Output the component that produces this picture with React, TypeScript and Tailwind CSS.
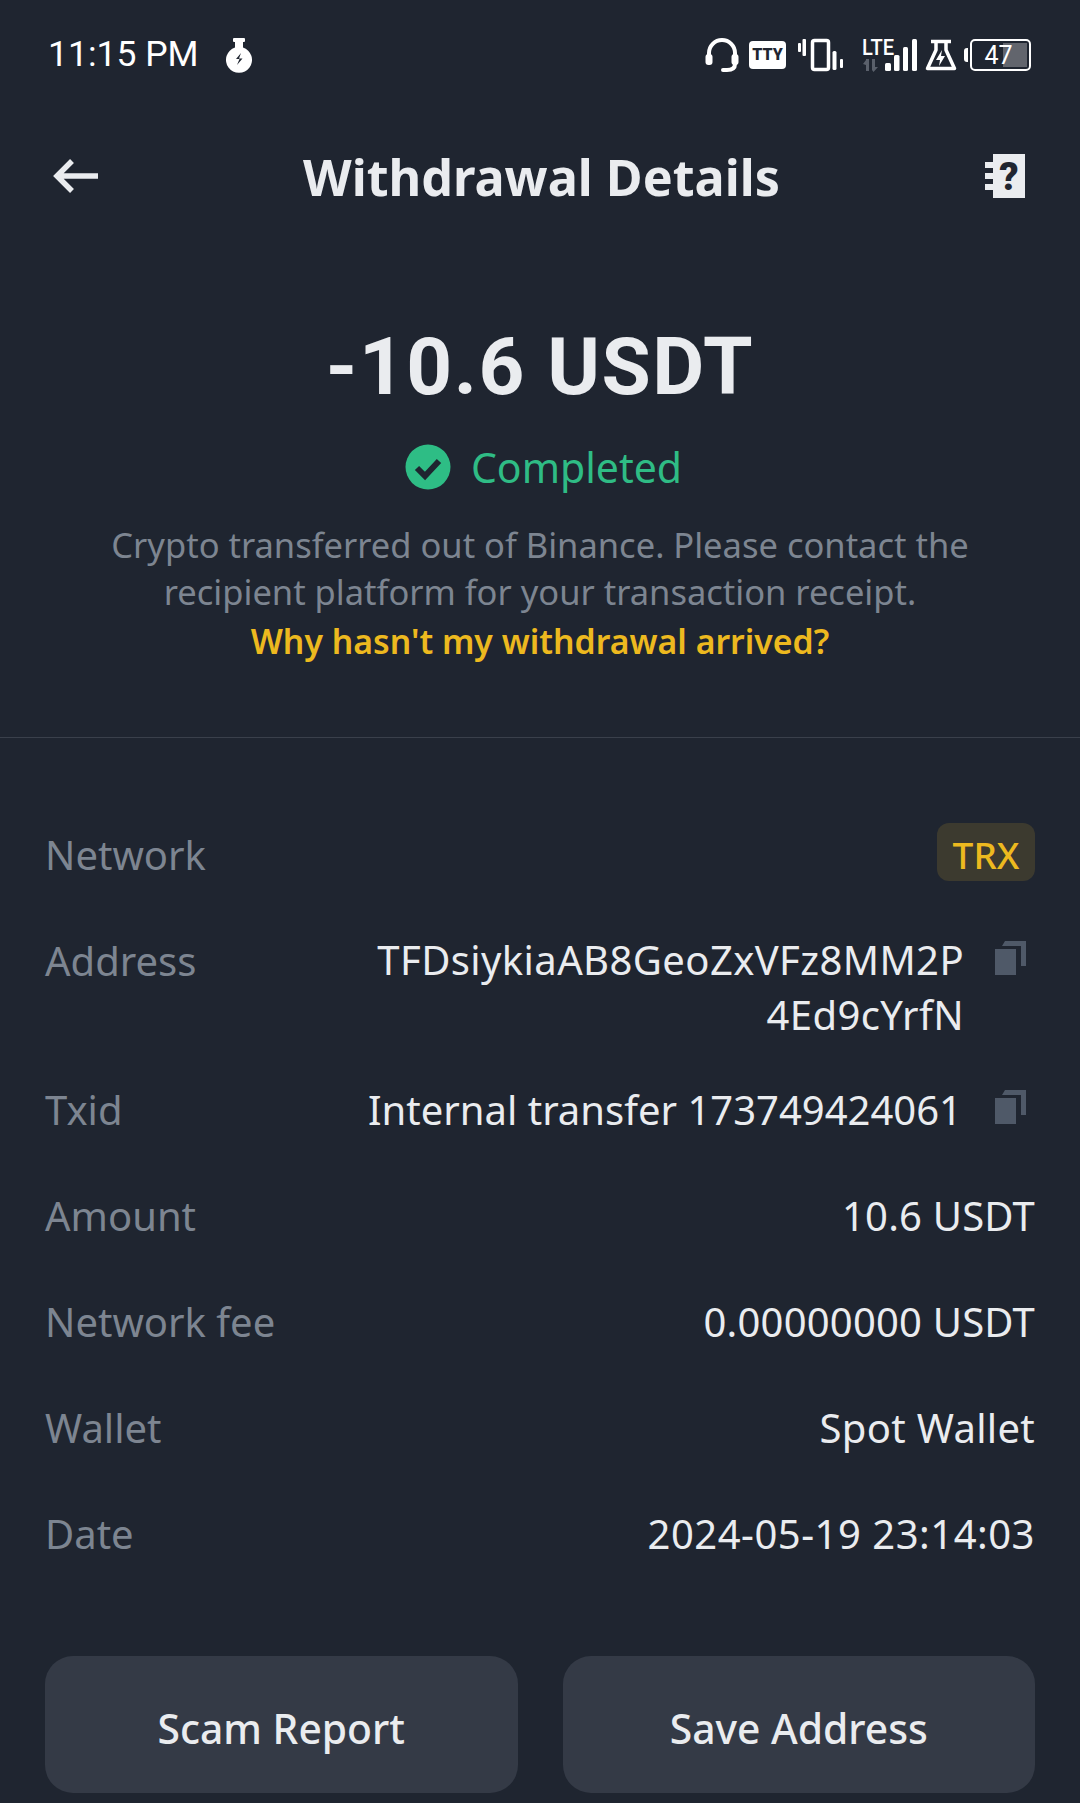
const rows = [
  { label: "Address", lines: ["TFDsiykiaAB8GeoZxVFz8MM2P", "4Ed9cYrfN"], rowClass: "-mb-[9px]", textClass: "tracking-[0.4px] leading-[55px] mr-[1px]", copy: true },
  { label: "Txid", lines: ["Internal transfer 173749424061"], rowClass: "", textClass: "mr-[3px]", copy: true },
  { label: "Amount", lines: ["10.6 USDT"], rowClass: "", textClass: "tracking-[0.2px]" },
  { label: "Network fee", lines: ["0.00000000 USDT"], rowClass: "", textClass: "tracking-[0.2px]" },
  { label: "Wallet", lines: ["Spot Wallet"], rowClass: "", textClass: "tracking-[0.3px]" },
  { label: "Date", lines: ["2024-05-19 23:14:03"], rowClass: "", textClass: "tracking-[0.5px]" },
];

const CopyIcon = () => (
  <svg width="32" height="36" viewBox="0 0 32 36" className="shrink-0" fill="#4f5968">
    <rect x="0" y="9" width="21" height="26" />
    <path d="M10 1H31V26H26V6H7Z" />
  </svg>
);

const StatusIcons = () => (
  <div className="flex items-center text-white">
    <svg width="34" height="36" viewBox="0 0 34 36" fill="none" stroke="white" strokeWidth="4">
      <path d="M4 20V16a13 13 0 0 1 26 0V27c0 4-3 6-8 6h-4" strokeLinecap="round" />
      <rect x="0.5" y="17" width="7" height="11" rx="3" fill="white" stroke="none" />
      <rect x="26.5" y="17" width="7" height="11" rx="3" fill="white" stroke="none" />
    </svg>
    <span className="ml-[10px] flex h-[28px] w-[37px] items-center justify-center rounded-[4px] bg-white font-['Roboto',sans-serif] text-[16px] font-black leading-none text-[#1f2530]">
      TTY
    </span>
    <svg width="46" height="34" viewBox="0 0 46 34" fill="white" className="ml-[12px]">
      <rect x="0" y="5" width="3" height="9" rx="1" />
      <rect x="4.5" y="1" width="3.5" height="17" rx="1" />
      <rect x="14.5" y="2.5" width="16" height="29" rx="2" fill="none" stroke="white" strokeWidth="3.5" />
      <rect x="34.5" y="13" width="4" height="19" rx="1.5" />
      <rect x="42" y="21" width="3" height="9" rx="1" />
    </svg>
    <svg width="56" height="34" viewBox="0 0 56 34" className="ml-[18px]" fill="white">
      <text x="0" y="17" fontFamily="Roboto" fontWeight="500" fontSize="22" textLength="32" lengthAdjust="spacingAndGlyphs">LTE</text>
      <path d="M4 21h3v12h-3zM1 26l3-4v5zM10 21h3v8h3l-4.5 5-1.5-2z" fill="#5a606b" />
      <rect x="23" y="25" width="6" height="8" rx="1.5" />
      <rect x="32" y="17" width="5.5" height="16" rx="1.5" />
      <rect x="41" y="9" width="5" height="24" rx="1.5" />
      <rect x="50" y="1" width="5" height="32" rx="1.5" />
    </svg>
    <svg width="32" height="32" viewBox="0 0 32 32" fill="none" stroke="white" strokeWidth="3.5" className="ml-[7px]">
      <path d="M6 2.5H26M11 2.5V11L2.5 29.5H29.5L21 11V2.5" strokeLinejoin="round" />
      <path d="M17 11l-6 10h4l-1 6 6-10h-4z" fill="white" stroke="none" />
    </svg>
    <div className="ml-[7px] flex items-center">
      <div className="h-[14px] w-[4px] rounded-l-[3px] bg-white" />
      <div className="relative ml-[2px] h-[32px] w-[61px] overflow-hidden rounded-[5px] border-2 border-white">
        <div className="absolute inset-y-[2px] right-[2px] w-[24px] bg-[#62656d]" />
        <span className="absolute inset-0 flex items-center justify-center pr-[4px] text-[25px] leading-none font-['Roboto',sans-serif]">47</span>
      </div>
    </div>
  </div>
);

export default function App() {
  return (
    <div className="min-h-[1803px] bg-[#1f2530] font-['Noto_Sans',sans-serif] text-[#eaecef]">
      {/* Status bar */}
      <div className="flex h-[110px] items-center justify-between pl-[48px] pr-[49px]">
        <div className="flex items-center">
          <span className="font-['Roboto',sans-serif] text-[35.500px] leading-none text-white">11:15 PM</span>
          <svg width="26" height="35" viewBox="0 0 26 35" className="ml-[27px]" fill="white">
            <rect x="7" y="0" width="12" height="4" rx="1" />
            <path d="M9 3h8v6.500a13 13 0 1 1-8 0z" />
            <path d="M15 15l-5 6h3.500l-2.500 6 5.500-6.500h-3.500l2-5.500z" fill="#1f2530" />
          </svg>
        </div>
        <StatusIcons />
      </div>

      {/* Title */}
      <div className="flex h-[132px] items-center justify-between pl-[53px] pr-[55px]">
        <svg width="45" height="34" viewBox="0 0 45 34" fill="none" stroke="#eaecef" strokeWidth="5.5">
          <path d="M45 17H5M19 2L4 17L19 32" />
        </svg>
        <h1 className="pt-[3px] text-[50.300px] font-bold leading-none">Withdrawal Details</h1>
        <svg width="40" height="44" viewBox="0 0 40 44" fill="#eaecef">
          <path d="M8 0H40V44H8V36H0V30H8V25H0V19H8V14H0V8H8Z" />
          <text x="24" y="36" textAnchor="middle" fontFamily="Roboto" fontWeight="900" fontSize="38" fill="#1f2530">?</text>
        </svg>
      </div>

      {/* Summary */}
      <div className="flex h-[496px] flex-col items-center border-b border-[#3a404b] pt-[84px]">
        <div className="font-['Roboto',sans-serif] text-[80px] font-bold leading-[82px] tracking-[1.5px]">-10.6 USDT</div>
        <div className="ml-[7px] mt-[34px] flex h-[50px] items-center gap-[20px] text-[#2fbc85]">
          <svg width="46" height="46" viewBox="0 0 46 46">
            <circle cx="23" cy="23" r="22.500" fill="#2ebd85" />
            <path d="M12 24L20 32L34 17" fill="none" stroke="#1f2530" strokeWidth="6" />
          </svg>
          <span className="text-[41px] leading-none">Completed</span>
        </div>
        <p className="mt-[29px] text-center text-[34.500px] leading-[47px] text-[#7d8591]">
          Crypto transferred out of Binance. Please contact the
          <br />
          recipient platform for your transaction receipt.
        </p>
        <a className="mt-[3px] text-[33.800px] font-semibold leading-[47px] text-[#edb91f]">Why hasn't my withdrawal arrived?</a>
      </div>

      {/* Details */}
      <div className="flex flex-col gap-[48px] pl-[45px] pr-[45px] pt-[88px] text-[40px] leading-[58px]">
        <div className="flex h-[58px] items-center justify-between">
          <span className="text-[#7d8591]">Network</span>
          <span className="mb-[6px] flex h-[58px] w-[98px] items-center justify-center rounded-[12px] bg-[#3c3a2f] pt-[6px] text-[37px] font-medium text-[#edb91f]">TRX</span>
        </div>
        {rows.map((row) => (
          <div key={row.label} className={`flex items-start justify-between ${row.rowClass}`}>
            <span className="text-[#7d8591]">{row.label}</span>
            <div className="flex items-start">
              <span className={`flex flex-col items-end ${row.textClass}`}>
                {row.lines.map((line) => (
                  <span key={line}>{line}</span>
                ))}
              </span>
              {row.copy && (
                <span className="ml-[30px] mr-[8px] mt-[8px]">
                  <CopyIcon />
                </span>
              )}
            </div>
          </div>
        ))}
      </div>

      {/* Actions */}
      <div className="mt-[93px] flex gap-[45px] pl-[45px] pr-[45px]">
        <button className="h-[137px] flex-1 rounded-[28px] bg-[#343a46] pt-[8px] text-[40.800px] font-medium">Scam Report</button>
        <button className="h-[137px] flex-1 rounded-[28px] bg-[#343a46] pt-[8px] text-[40.800px] font-medium">Save Address</button>
      </div>
    </div>
  );
}
